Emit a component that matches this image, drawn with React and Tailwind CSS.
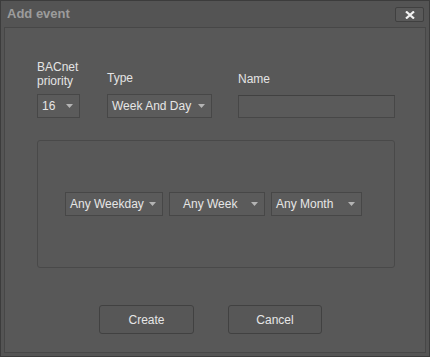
const font = { fontFamily: '"Liberation Sans", Arial, sans-serif' };

/* ─── Pequeño triángulo del combo ───────────────────────────── */
const Arrow = () => (
  <svg width="7" height="4" viewBox="0 0 7 4" className="shrink-0">
    <path d="M0 0h7L3.5 4z" fill="#b4b4b4" />
  </svg>
);

function Combo({ value, className = "", pad = "pl-[4px]" }) {
  return (
    <div className={`h-[24px] flex items-center justify-between ${pad} pr-[6px] border border-[#474747] bg-[#5b5b5b] text-[12px] text-[#e6e6e6] ${className}`}>
      <span className="whitespace-nowrap">{value}</span>
      <Arrow />
    </div>
  );
}

function Btn({ children, className = "" }) {
  return (
    <div className={`h-[29px] flex items-center justify-center rounded-[3px] border border-[#414141] bg-[#575757] text-[12px] text-[#e6e6e6] ${className}`}>
      {children}
    </div>
  );
}

export default function App() {
  return (
    <div style={font} className="w-[430px] h-[357px] border border-[#3c3c3c] bg-[#545454] flex flex-col">
      {/* barra de título */}
      <div className="h-[26px] shrink-0 flex items-start pl-[6px] pr-[5px]">
        <span className="mt-[5px] text-[13px] leading-[16px] font-bold text-[#9c9c9c]">Add event</span>
        <div className="ml-auto mt-[6px] w-[29px] h-[15px] rounded-[2px] border border-[#404040] bg-[#595959] flex items-center justify-center">
          <svg width="10" height="8" viewBox="0 0 10 8">
            <path d="M1 0.5 9 7.5M9 0.5 1 7.5" stroke="#f2f2f2" strokeWidth="2.2" />
          </svg>
        </div>
      </div>

      {/* cuerpo */}
      <div className="mx-[3px] mb-[3px] flex-1 border border-[#474747] bg-[#585858] flex flex-col pt-[32px] pl-[32px]">
        <div className="flex items-end">
          <div className="flex flex-col w-[43px]">
            <div className="text-[12px] leading-[14px] text-[#e4e4e4] mb-[6px]">BACnet<br />priority</div>
            <Combo value="16" className="w-[43px] h-[23px]" />
          </div>
          <div className="flex flex-col ml-[27px]">
            <div className="text-[12px] leading-[14px] text-[#e4e4e4] mb-[9px]">Type</div>
            <Combo value="Week And Day" className="w-[105px] h-[23px]" />
          </div>
          <div className="flex flex-col ml-[26px]">
            <div className="text-[12px] leading-[14px] text-[#e4e4e4] mb-[9px]">Name</div>
            <div className="w-[157px] h-[23px] border border-[#474747] border-t-[#414141] bg-[#5a5a5a]" />
          </div>
        </div>

        <div className="mt-[22px] w-[358px] h-[128px] rounded-[3px] border border-[#494949] flex items-center pl-[27px]">
          <Combo value="Any Weekday" className="w-[98px]" />
          <Combo value="Any Week" pad="pl-[13px]" className="w-[96px] ml-[6px]" />
          <Combo value="Any Month" className="w-[91px] ml-[6px]" />
        </div>

        <div className="mt-[37px] flex pl-[62px]">
          <Btn className="w-[95px]">Create</Btn>
          <Btn className="w-[94px] ml-[34px]">Cancel</Btn>
        </div>
      </div>
    </div>
  );
}
